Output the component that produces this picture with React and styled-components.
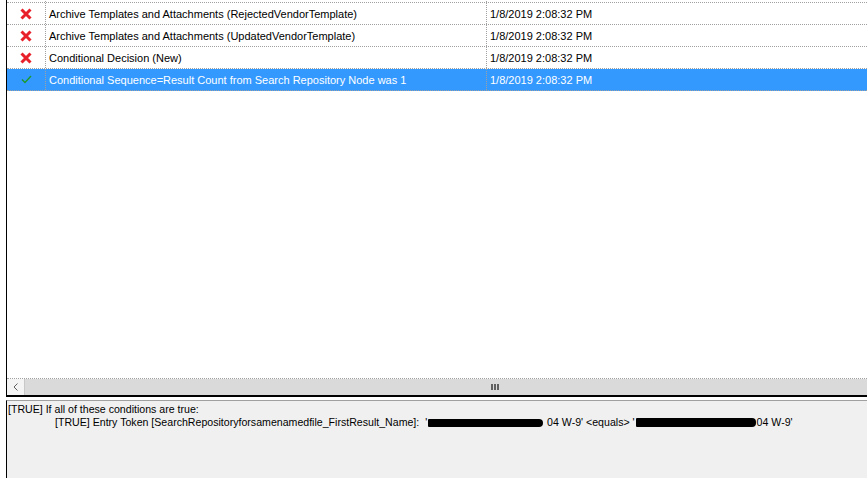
import React from 'react'
import styled, { createGlobalStyle } from 'styled-components'

const GlobalStyle = createGlobalStyle`
  html, body {
    margin: 0;
    padding: 0;
    background: #ffffff;
  }
  body {
    font-family: Tahoma, "Liberation Sans", Arial, sans-serif;
    font-size: 11px;
    color: #000;
  }
`

const Page = styled.div`
  width: 867px;
  height: 478px;
  overflow: hidden;
  display: flex;
  flex-direction: column;
  padding-left: 6px;
  box-sizing: border-box;
`

const ListView = styled.div`
  height: 397px;
  flex: none;
  display: flex;
  flex-direction: column;
  border-left: 1px solid #000;
  border-bottom: 2px solid #000;
  box-sizing: border-box;
  overflow: hidden;
`

const Viewport = styled.div`
  flex: 1;
  overflow: hidden;
`

const Rows = styled.div`
  margin-top: -19px;
  width: 1000px;
`

const Row = styled.div`
  display: grid;
  grid-template-columns: 39px 441px 1fr;
  height: 22px;
  box-sizing: border-box;
  border-bottom: 1px dotted #a0a0a0;
  background: ${p => (p.$selected ? '#3399ff' : '#fff')};
  color: ${p => (p.$selected ? '#fff' : '#000')};
`

const Cell = styled.div`
  display: flex;
  align-items: center;
  justify-content: ${p => (p.$center ? 'center' : 'flex-start')};
  padding-left: ${p => (p.$center ? '0' : '3px')};
  border-right: ${p => (p.$last ? 'none' : '1px dotted #a0a0a0')};
  white-space: nowrap;
  overflow: hidden;
`

const HScroll = styled.div`
  height: 17px;
  flex: none;
  display: flex;
  border-top: 1px dotted #a0a0a0;
  box-sizing: border-box;
  overflow: hidden;
`

const ArrowButton = styled.div`
  width: 17px;
  flex: none;
  display: flex;
  align-items: center;
  justify-content: center;
  background: #f4f4f4;
  border-right: 1px solid #c8c8c8;
`

const Thumb = styled.div`
  width: 940px;
  flex: none;
  background: #dadada;
  display: flex;
  align-items: center;
  justify-content: center;
  gap: 1px;
`

const GripBar = styled.span`
  width: 2px;
  height: 6px;
  background: #606060;
`

const Gap = styled.div`
  height: 3px;
  flex: none;
`

const Details = styled.div`
  flex: 1;
  background: #f0f0f0;
  border-top: 1px solid #a0a0a0;
  border-left: 1px solid #000;
  padding: 2px 0 0 1px;
  line-height: 13px;
  font-size: 10.6px;
  white-space: nowrap;
  overflow: hidden;
`

const DetailLine = styled.div`
  display: flex;
  align-items: center;
  padding-left: ${p => p.$indent || 0}px;
  white-space: pre;
`

const Redaction = styled.span`
  display: inline-block;
  width: ${p => p.$w}px;
  height: ${p => p.$h || 8}px;
  background: #000;
  border-radius: 1px 4px 4px 1px;
  margin: 0 1px;
`

const CrossIcon = () => (
  <svg width="12" height="12" viewBox="0 0 12 12">
    <path d="M1.5 1.5 L10.5 10.5 M10.5 1.5 L1.5 10.5" stroke="#e8202a" strokeWidth="3" strokeLinecap="butt" />
  </svg>
)

const CheckIcon = () => (
  <svg width="11" height="9" viewBox="0 0 11 9">
    <path d="M1 4.5 L4 7.5 L10 1" stroke="#1e9a2a" strokeWidth="1.4" fill="none" />
  </svg>
)

const rows = [
  { icon: null, text: '', date: '' },
  { icon: 'x', text: 'Archive Templates and Attachments (RejectedVendorTemplate)', date: '1/8/2019 2:08:32 PM' },
  { icon: 'x', text: 'Archive Templates and Attachments (UpdatedVendorTemplate)', date: '1/8/2019 2:08:32 PM' },
  { icon: 'x', text: 'Conditional Decision (New)', date: '1/8/2019 2:08:32 PM' },
  { icon: 'ok', text: 'Conditional Sequence=Result Count from Search Repository Node was 1', date: '1/8/2019 2:08:32 PM', selected: true },
]

export default function App() {
  return (
    <>
      <GlobalStyle />
      <Page>
        <ListView>
          <Viewport>
            <Rows>
              {rows.map((r, i) => (
                <Row key={i} $selected={r.selected}>
                  <Cell $center>
                    {r.icon === 'x' && <CrossIcon />}
                    {r.icon === 'ok' && <CheckIcon />}
                  </Cell>
                  <Cell>{r.text}</Cell>
                  <Cell $last>{r.date}</Cell>
                </Row>
              ))}
            </Rows>
          </Viewport>
          <HScroll>
            <ArrowButton>
              <svg width="5" height="8" viewBox="0 0 5 8">
                <path d="M4.5 0.5 L1 4 L4.5 7.5" stroke="#606060" strokeWidth="1" fill="none" />
              </svg>
            </ArrowButton>
            <Thumb>
              <GripBar />
              <GripBar />
              <GripBar />
            </Thumb>
          </HScroll>
        </ListView>
        <Gap />
        <Details>
          <DetailLine>[TRUE] If all of these conditions are true:</DetailLine>
          <DetailLine $indent={47}>
            {"[TRUE] Entry Token [SearchRepositoryforsamenamedfile_FirstResult_Name]:  '"}
            <Redaction $w={115} />
            {" 04 W-9' <equals> '"}
            <Redaction $w={120} $h={9} />
            {"04 W-9'"}
          </DetailLine>
        </Details>
      </Page>
    </>
  )
}
